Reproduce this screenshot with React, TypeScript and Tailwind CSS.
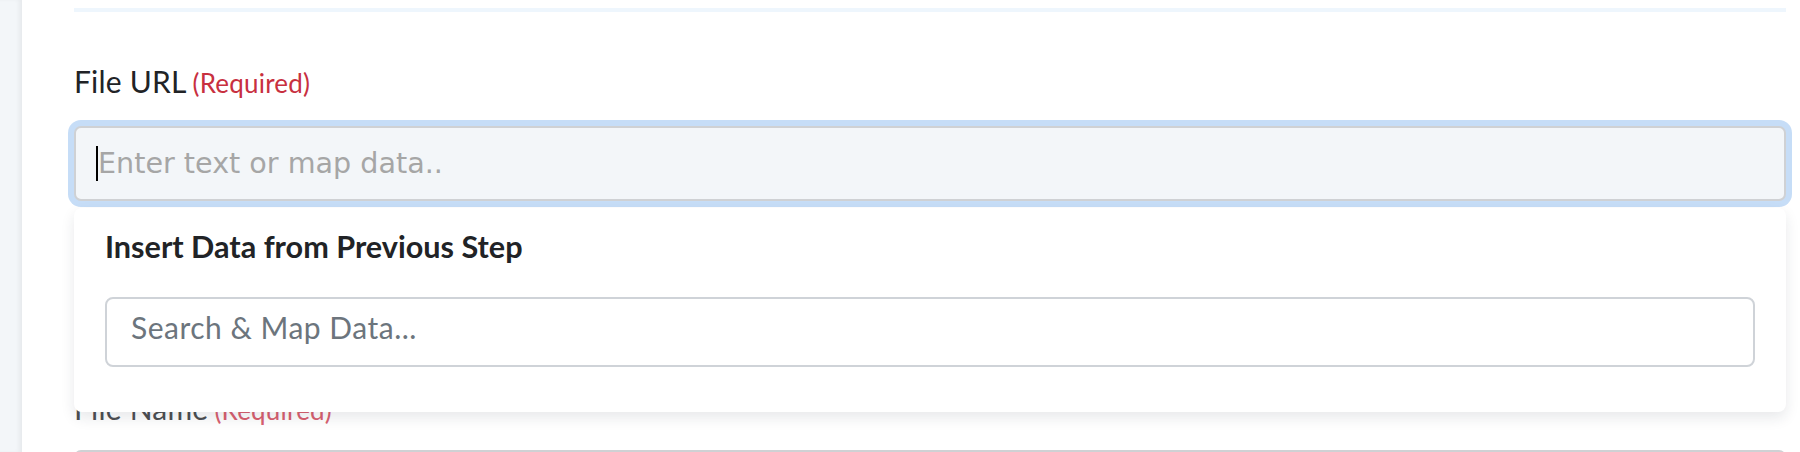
import React from 'react';

const sans = "font-['Lato','Noto_Sans',sans-serif]";

function FieldLabel({ text, muted }: { text: string; muted?: boolean }) {
  return (
    <div className={`${sans} h-[36px] text-[30px] leading-[36px] whitespace-nowrap tracking-[0.2px] ${muted ? 'text-[#4d4f52]' : 'text-[#212326]'}`}>
      {text}
      <span className={`ml-[6px] text-[26px] ${muted ? 'text-[#d9606f]' : 'text-[#c8303f]'}`}>(Required)</span>
    </div>
  );
}

export default function App() {
  return (
    <div className="flex h-[452px] overflow-hidden bg-white">
      <div className="w-[22px] shrink-0 bg-[#f3f6f9] shadow-[inset_-4px_0_4px_-1px_rgba(0,0,0,0.05)]" />

      <div className="flex-1 pl-[52px] pr-[14px]">
        <div className="mt-[8px] h-[4px] bg-[#eef6fd]" />

        {/* File URL */}
        <div className="mt-[51px]">
          <FieldLabel text="File URL" />
          <div className="relative mt-[27px]">
            <div className="flex h-[75px] items-center rounded-[7px] border-2 border-[#cfd1d4] bg-[#f3f6f9] pl-[20px] shadow-[0_0_0_6px_#c6ddf7]">
              <span className="h-[35px] w-[2px] bg-black" />
              <span className="font-['DejaVu_Sans',sans-serif] text-[28.6px] text-[#a6a6a6]">Enter text or map data..</span>
            </div>

            {/* mapping dropdown */}
            <div className="absolute left-0 right-0 top-[82px] z-10 h-[204px] rounded-[8px] bg-white px-[31px] pt-[21px] shadow-[0_6px_14px_rgba(30,40,60,0.10)]">
              <div className={`${sans} h-[36px] text-[30.6px] font-bold leading-[36px] text-[#212326]`}>
                Insert Data from Previous Step
              </div>
              <div className="mt-[32px] h-[70px] rounded-[8px] border-2 border-[#cfd3d8] bg-white pl-[24px] pt-[10px]">
                <span className={`${sans} text-[30px] leading-[36px] tracking-[0.5px] text-[#6c757d]`}>Search &amp; Map Data...</span>
              </div>
            </div>
          </div>
        </div>

        {/* File Name */}
        <div className="mt-[189px]">
          <FieldLabel text="File Name" muted />
          <div className="mt-[24px] h-[75px] rounded-[7px] border-2 border-[#cfd1d4] bg-[#f3f6f9]" />
        </div>
      </div>
    </div>
  );
}
